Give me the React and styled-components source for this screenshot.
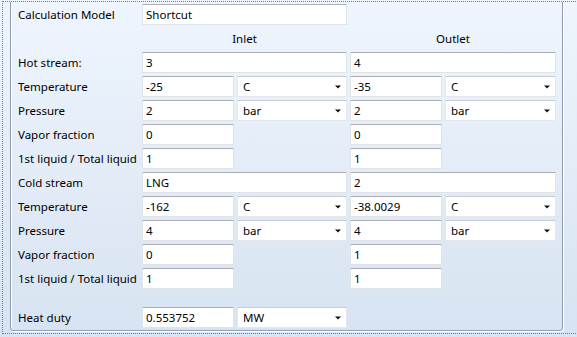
import React from "react";
import styled, { createGlobalStyle } from "styled-components";

const Global = createGlobalStyle`
  html, body { margin: 0; padding: 0; }
  body {
    width: 577px;
    height: 337px;
    overflow: hidden;
    background: linear-gradient(to bottom, #eef5fd 0%, #e3ecf7 50%, #d7e3f1 100%);
    font-family: "Noto Sans", "Open Sans", sans-serif;
    font-size: 11.5px;
    color: #000;
  }
`;

const Frame = styled.div`
  box-sizing: border-box;
  margin: 1px 0 0 2px;
  width: 580px;
  height: 333px;
  border: 1px dotted #6f7b8b;
  overflow: hidden;
`;

const Panel = styled.div`
  box-sizing: border-box;
  margin: -6px 0 0 7px;
  width: 553px;
  height: 335px;
  border: 1px solid #8f9cae;
  border-radius: 3px;
  box-shadow: 1px 1px 0 #fff, inset 1px 1px 0 #fff;
  padding: 7px 0 0 7px;
`;

const Grid = styled.div`
  display: grid;
  grid-template-columns: 121px 92px 110px 92px 111px;
  column-gap: 3px;
  row-gap: 3px;
  align-items: center;
`;

const Label = styled.div`
  grid-column: 1;
  white-space: nowrap;
  height: 21px;
  line-height: 21px;
`;

const Header = styled.div`
  grid-column: ${(p) => p.$col};
  text-align: center;
  height: 21px;
  line-height: 21px;
`;

const Box = styled.div`
  grid-column: ${(p) => p.$col} / span ${(p) => p.$span || 1};
  box-sizing: border-box;
  height: 21px;
  background: #fff;
  border: 1px solid #dfe3ea;
  border-top-color: #abadb3;
  border-radius: 1px;
  padding: 0 3px;
  line-height: 19px;
  white-space: nowrap;
  overflow: hidden;
`;

const Combo = styled.div`
  grid-column: ${(p) => p.$col};
  box-sizing: border-box;
  height: 21px;
  background: #fff;
  border: 1px solid #e4e8ee;
  border-top-color: #c9ccd3;
  border-radius: 1px;
  padding: 0 4px 0 5px;
  line-height: 19px;
  display: flex;
  align-items: center;
  justify-content: space-between;
`;

const Spacer = styled.div`
  grid-column: 1 / -1;
  height: ${(p) => p.$h}px;
`;

const Arrow = () => (
  <svg width="6" height="4" viewBox="0 0 6 4" style={{ marginRight: 1 }}>
    <path d="M0 0.5 H6 L3 3.5 Z" fill="#111" />
  </svg>
);

const Unit = ({ col, children }) => (
  <Combo $col={col}>
    <span>{children}</span>
    <Arrow />
  </Combo>
);

const StreamRows = ({ name, inName, outName, tin, tout, pin, pout, vin, vout, lin, lout }) => (
  <>
    <Label>{name}</Label>
    <Box $col={2} $span={2}>{inName}</Box>
    <Box $col={4} $span={2}>{outName}</Box>

    <Label>Temperature</Label>
    <Box $col={2}>{tin}</Box>
    <Unit col={3}>C</Unit>
    <Box $col={4}>{tout}</Box>
    <Unit col={5}>C</Unit>

    <Label>Pressure</Label>
    <Box $col={2}>{pin}</Box>
    <Unit col={3}>bar</Unit>
    <Box $col={4}>{pout}</Box>
    <Unit col={5}>bar</Unit>

    <Label>Vapor fraction</Label>
    <Box $col={2}>{vin}</Box>
    <Box $col={4}>{vout}</Box>

    <Label>1st liquid / Total liquid</Label>
    <Box $col={2}>{lin}</Box>
    <Box $col={4}>{lout}</Box>
  </>
);

export default function App() {
  return (
    <>
      <Global />
      <Frame>
        <Panel>
          <Grid>
            <Label>Calculation Model</Label>
            <Box $col={2} $span={2}>Shortcut</Box>

            <Header $col="2 / span 2">Inlet</Header>
            <Header $col="4 / span 2">Outlet</Header>

            <StreamRows
              name="Hot stream:"
              inName="3"
              outName="4"
              tin="-25"
              tout="-35"
              pin="2"
              pout="2"
              vin="0"
              vout="0"
              lin="1"
              lout="1"
            />
            <StreamRows
              name="Cold stream"
              inName="LNG"
              outName="2"
              tin="-162"
              tout="-38.0029"
              pin="4"
              pout="4"
              vin="0"
              vout="1"
              lin="1"
              lout="1"
            />
            <Spacer $h={12} />
            <Label>Heat duty</Label>
            <Box $col={2}>0.553752</Box>
            <Unit col={3}>MW</Unit>
          </Grid>
        </Panel>
      </Frame>
    </>
  );
}
